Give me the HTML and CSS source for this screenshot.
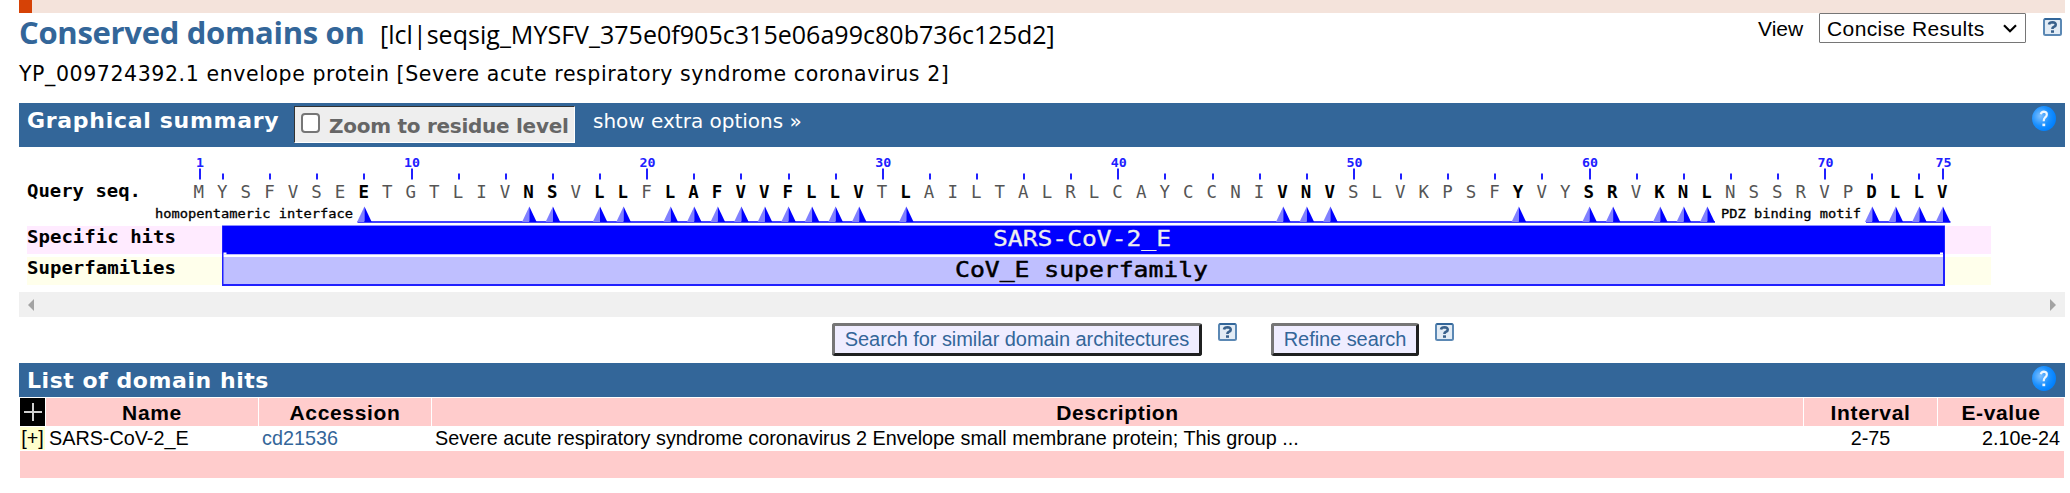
FILE: index.html
```html
<!DOCTYPE html>
<html lang="en">
<head>
<meta charset="utf-8">
<title>Conserved domains</title>
<link rel="stylesheet" href="styles.css">
</head>
<body>
<svg class="defs" width="0" height="0" aria-hidden="true">
  <defs>
    <radialGradient id="ball" cx="35%" cy="40%" r="65%">
      <stop offset="0" stop-color="#7fc0ff"/><stop offset=".6" stop-color="#1a90ff"/><stop offset="1" stop-color="#0080ff"/>
    </radialGradient>
    <symbol id="help-ball" viewBox="0 0 24 25">
      <ellipse cx="12" cy="12.5" rx="12" ry="12.5" fill="url(#ball)"/>
      <path d="M8.8 8.3Q9.3 5.6 12 5.6Q15 5.8 14.8 8.8Q14.6 10.4 12.9 11.7Q11.7 12.8 11.7 15.2" fill="none" stroke="#eef7ff" stroke-width="2.2"/>
      <rect x="10.4" y="17.6" width="2.8" height="2.6" fill="#eef7ff"/>
    </symbol>
    <symbol id="help-box" viewBox="0 0 19 18">
      <rect x="1" y="1" width="17" height="16" rx="1.5" fill="#e3ecf5" stroke="#5b88b4" stroke-width="2"/>
      <path d="M1.5 1H17.5" stroke="#336699" stroke-width="2"/>
      <path d="M6 6.4Q6.4 4.3 9.6 4.3Q12.8 4.4 12.7 6.8Q12.6 8.2 10.8 8.9Q9.4 9.6 9.4 11" fill="none" stroke="#39618c" stroke-width="2.6"/>
      <rect x="8" y="12.3" width="3" height="2.5" fill="#39618c"/>
    </symbol>
  </defs>
</svg>
<main class="page">
  <div class="band"><span class="band-mark"></span></div>
  <header class="head">
    <div class="titles">
      <h1><span class="title">Conserved domains on</span><span class="query-id">[lcl|seqsig_MYSFV_375e0f905c315e06a99c80b736c125d2]</span></h1>
      <p class="subtitle">YP_009724392.1 envelope protein [Severe acute respiratory syndrome coronavirus 2]</p>
    </div>
    <div class="view">
      <span class="view-label">View</span>
      <div class="select"><span>Concise Results</span><svg width="14" height="9" viewBox="0 0 14 9"><path d="M1 1.2L7 7.2L13 1.2" fill="none" stroke="#000" stroke-width="2.2"/></svg></div>
      <svg class="help-box"><use href="#help-box"/></svg>
    </div>
  </header>
  <section class="bar summary-bar">
    <h2 class="summary-title">Graphical summary</h2>
    <label class="zoom"><span class="check"></span><span class="zoom-text">Zoom to residue level</span></label>
    <span class="extra">show extra options »</span>
    <svg class="help-ball"><use href="#help-ball"/></svg>
  </section>
  <svg class="graph" id="graph" width="2046" height="145" viewBox="19 147 2046 145"></svg>
  <div class="scrollbar">
    <svg width="6" height="12"><path d="M6 0V12L0 6Z" fill="#a3a3a3"/></svg>
    <svg width="6" height="12"><path d="M0 0V12L6 6Z" fill="#a3a3a3"/></svg>
  </div>
  <div class="actions">
    <button class="btn btn-similar"><span>Search for similar domain architectures</span></button>
    <svg class="help-box"><use href="#help-box"/></svg>
    <button class="btn btn-refine"><span>Refine search</span></button>
    <svg class="help-box"><use href="#help-box"/></svg>
  </div>
  <section class="bar list-bar">
    <h2 class="list-title">List of domain hits</h2>
    <svg class="help-ball"><use href="#help-ball"/></svg>
  </section>
  <div class="hits">
    <div class="th plus"><svg width="18" height="18"><path d="M9 0V18M0 9H18" stroke="#d0d0d0" stroke-width="2"/></svg></div>
    <div class="th"><span>Name</span></div>
    <div class="th"><span>Accession</span></div>
    <div class="th"><span>Description</span></div>
    <div class="th"><span>Interval</span></div>
    <div class="th"><span>E-value</span></div>
    <div class="td expand">[+]</div>
    <div class="td name">SARS-CoV-2_E</div>
    <div class="td accession">cd21536</div>
    <div class="td description">Severe acute respiratory syndrome coronavirus 2 Envelope small membrane protein; This group ...</div>
    <div class="td interval">2-75</div>
    <div class="td evalue">2.10e-24</div>
    <div class="foot"></div>
  </div>
</main>
<script src="graph.js"></script>
</body>
</html>
```
FILE: styles.css
```css
* { box-sizing: border-box; }
body { margin: 0; background: #fff; color: #000; overflow: hidden; font-family: "Liberation Sans", Arial, sans-serif; }
h1, h2, p { margin: 0; font-weight: normal; }
.defs { position: absolute; }
.page { width: 2046px; margin-left: 19px; white-space: nowrap; }
.band { height: 13px; background: #f4e3db; display: flex; }
.band-mark { width: 13px; background: #d64206; }
.head { height: 90px; display: flex; justify-content: space-between; }
h1 { display: flex; align-items: baseline; height: 42px; }
.title { width: 361px; font: 700 31px/38px "Open Sans", sans-serif; color: #336699; letter-spacing: -0.3px; }
.query-id { font: 25px/38px "Open Sans", sans-serif; letter-spacing: 0.03px; }
.subtitle { font: 20.5px/38px "DejaVu Sans", sans-serif; letter-spacing: 0.59px; }
.view { display: flex; align-items: flex-start; font-size: 21px; padding-right: 3px; }
.view-label { line-height: 32px; width: 61px; }
.select { width: 207px; height: 30px; border: 1px solid #767676; border-radius: 1px; line-height: 29px; letter-spacing: 0.4px; padding: 0 8px 0 7px; display: flex; align-items: center; justify-content: space-between; margin-right: 17px; }
.help-box { width: 19px; height: 18px; flex: none; }
.view .help-box { margin-top: 5px; }
.bar { background: #336699; color: #fff; display: flex; }
.summary-bar { height: 44px; padding: 3px 9px 0 8px; }
.summary-title, .list-title { font: 700 22px/30px "DejaVu Sans", sans-serif; }
.summary-title { width: 267px; letter-spacing: 0.7px; }
.list-title { letter-spacing: 0.55px; }
.zoom { width: 281px; height: 37px; background: #eee; border: 1px solid; border-color: #333 #fff #fff #333; display: flex; padding: 6px 0 0 6px; }
.check { width: 19px; height: 20px; border: 2px solid #767676; border-radius: 4px; background: #fff; margin-right: 9px; }
.zoom-text { font: 700 20px/26px "DejaVu Sans", sans-serif; color: #666; letter-spacing: -0.27px; }
.extra { font: 20px/31px "DejaVu Sans", sans-serif; margin-left: 18px; }
.help-ball { width: 24px; height: 25px; margin-left: auto; }
.graph { display: block; }
.scrollbar { height: 25px; background: #f0f0f0; display: flex; align-items: center; justify-content: space-between; padding: 0 9px; }
.actions { height: 46px; padding: 6px 0 0 813px; display: flex; align-items: flex-start; }
.btn { height: 33px; padding: 0; font: 20px/25px "Liberation Sans", Arial, sans-serif; color: #336699; background: #efedff; border: solid; border-width: 3px; border-color: #767676 #1f2020 #1f2020 #767676; border-radius: 3px; white-space: nowrap; letter-spacing: -0.06px; }
.btn-similar { width: 370px; margin-right: 16px; }
.btn-refine { width: 148px; margin: 0 16px 0 34px; }
.list-bar { height: 34px; padding: 3px 9px 0 8px; }
.hits { display: grid; grid-template-columns: 25px 212px 172px 1371px 133px 126px; grid-template-rows: 28px 24px 28px; column-gap: 1px; row-gap: 0; padding: 1px 1px 0; }
.th { background: #fcc; display: flex; align-items: center; justify-content: center; font: 700 21px/28px "Liberation Sans", Arial, sans-serif; letter-spacing: 0.65px; padding-top: 1px; }
.th.plus { background: #000; padding: 0; }
.td { font-size: 19.8px; line-height: 23px; margin-top: 1px; height: 23px; }
.expand { background: #ffc; text-align: center; }
.name, .description { padding-left: 3px; }
.accession { padding-left: 3px; color: #336699; }
.interval { text-align: center; }
.evalue { text-align: right; padding-right: 4px; }
.foot { grid-column: 1 / -1; background: #fcc; margin-top: 1px; height: 28px; }
.mono { font-family: "DejaVu Sans Mono", monospace; }
.bold { font-weight: 700; }
```
FILE: graph.js
```js
const NS = "http://www.w3.org/2000/svg";
const graph = document.getElementById("graph");
const sequence = "MYSFVSEETGTLIVNSVLLFLAFVVFLLVTLAILTALRLCAYCCNIVNVSLVKPSFYVYSRVKNLNSSRVPDLLV";
const sites = [8, 15, 16, 18, 19, 21, 22, 23, 24, 25, 26, 27, 28, 29, 31, 47, 48, 49, 57, 60, 61, 63, 64, 65, 72, 73, 74, 75];
const majors = [1, 10, 20, 30, 40, 50, 60, 70, 75];
const xOf = n => 199.5 + (n - 1) * 23.56;

function add(tag, attrs, text) {
  const el = document.createElementNS(NS, tag);
  for (const key in attrs) el.setAttribute(key, attrs[key]);
  if (text) el.textContent = text;
  graph.appendChild(el);
}
function rect(x, y, width, height, fill) {
  add("rect", { x, y, width, height, fill });
}
function label(text, x, y, width, size, fill, bold, weight = 0) {
  add("text", { x, y, "font-size": size, fill, stroke: fill, "stroke-width": weight, textLength: width, lengthAdjust: "spacingAndGlyphs", class: bold ? "mono bold" : "mono" }, text);
}

rect(27, 226, 195, 28, "#ffebff");
rect(1945, 226, 46, 28, "#ffebff");
rect(27, 257, 195, 28, "#ffffeb");
rect(1945, 257, 46, 28, "#ffffeb");
label("Query seq.", 27, 196.5, 114, 18, "#000", true);
label("Specific hits", 27, 242.5, 149, 18, "#000", true);
label("Superfamilies", 27, 273.5, 149, 18, "#000", true);

for (let n = 1; n <= 75; n++) {
  const x = xOf(n);
  const major = majors.includes(n);
  const site = sites.includes(n);
  if (major) {
    rect(Math.round(x) - 1, 168.5, 2, 11, "#2020ff");
    const w = String(n).length * 8;
    label(String(n), x - w / 2 + 0.5, 167, w, 13, "#2020ff", true);
  } else if (n % 2 === 0) {
    rect(Math.round(x) - 1, 173.5, 2, 6, "#2020ff");
  }
  label(sequence[n - 1], x - 6, 198, 10.5, 18, site ? "#000" : "#555", site);
}

rect(357.5, 221, 1357.5, 2, "#4040ff");
rect(1866, 221, 84.5, 2, "#4040ff");
for (const n of sites) {
  const x = xOf(n);
  add("path", { d: `M${x} 206.5V222H${x - 7.3}Z`, fill: "#8080ff" });
  add("path", { d: `M${x} 206.5V222H${x + 7.3}Z`, fill: "#0000ff" });
}
label("homopentameric interface", 155, 218, 198, 12.5, "#000", false, 0.3);
label("PDZ binding motif", 1721, 218, 140, 12.5, "#000", false, 0.3);

rect(222, 225.5, 1723, 60.5, "#2020ff");
rect(223, 226, 1721, 28, "#0000ff");
rect(223.5, 254.3, 1719.5, 2.7, "#fff");
rect(223.5, 252.5, 3, 2, "#fff");
rect(1940, 252.5, 3, 2, "#fff");
rect(223.5, 257, 1719.5, 27, "#bfbfff");
label("SARS-CoV-2_E", 993, 246, 178, 22, "#eee", false, 0.3);
label("CoV_E superfamily", 955, 277, 253, 22, "#000", false, 0.5);
```
